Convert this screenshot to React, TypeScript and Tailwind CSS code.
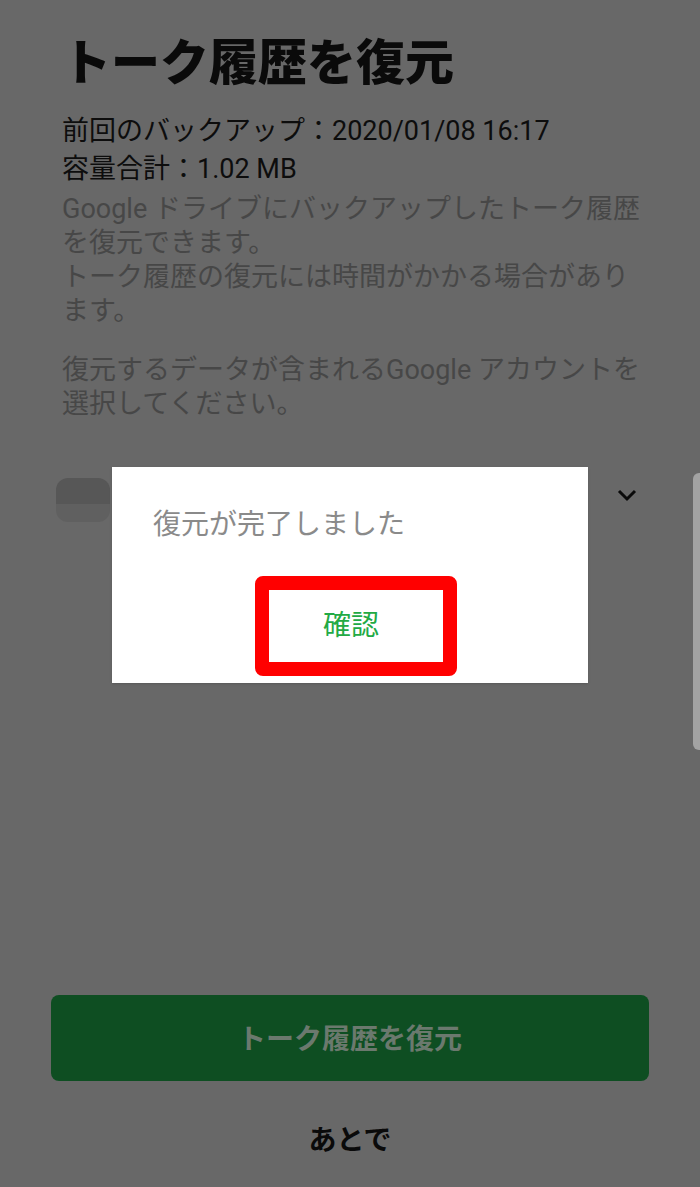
export default function App() {
  return (
    <div
      className="relative flex h-[1187px] w-[700px] flex-col overflow-hidden bg-[#686868]"
      style={{ fontFamily: 'Roboto, "Noto Sans CJK JP", sans-serif' }}
    >
      <div className="px-[62px] pt-[34px]">
        <h1 className="text-[49px] font-black leading-[60px] text-[#0a0a0a]">トーク履歴を復元</h1>
        <div className="mt-[18px] text-[27px] leading-[38px] text-[#0d0d0d]">
          <p>前回のバックアップ：2020/01/08 16:17</p>
          <p>容量合計：1.02 MB</p>
        </div>
        <p className="-mr-[20px] mt-[4px] whitespace-nowrap text-[27px] leading-[34px] text-[#474747]">
          Google ドライブにバックアップしたトーク履歴
          <br />
          を復元できます。
          <br />
          トーク履歴の復元には時間がかかる場合があり
          <br />
          ます。
        </p>
        <p className="-mr-[20px] mt-[25px] whitespace-nowrap text-[27px] leading-[34px] text-[#474747]">
          復元するデータが含まれるGoogle アカウントを
          <br />
          選択してください。
        </p>
        <div className="mt-[57px] -ml-[6px] flex items-start justify-between">
          <div className="flex h-[44px] w-[54px] flex-col overflow-hidden rounded-[12px]">
            <div className="h-[26px] bg-[#575757]" />
            <div className="flex-1 bg-[#606060]" />
          </div>
          <svg width="22" height="14" viewBox="0 0 22 14" className="mt-[10px]">
            <path d="M3 3 L11 11 L19 3" fill="none" stroke="#0a0a0a" strokeWidth="3" />
          </svg>
        </div>
      </div>

      <div className="mt-auto px-[51px] pb-[26px]">
        <div className="flex h-[86px] items-center justify-center rounded-[8px] bg-[#0e4e22]">
          <span className="mt-[4px] text-[28px] font-bold text-[#6b796e]">トーク履歴を復元</span>
        </div>
        <p className="mt-[40px] text-center text-[28px] font-bold leading-[40px] text-[#0a0a0a]">あとで</p>
      </div>

      {/* scrollbar */}
      <div className="absolute right-0 top-[473px] h-[277px] w-[7px] rounded-l-[6px] bg-[#a3a3a3]" />

      {/* dialog */}
      <div className="absolute left-[112px] top-[467px] h-[216px] w-[476px] bg-white shadow-sm">
        <p className="pl-[41px] pt-[38px] text-[28px] leading-[40px] text-[#8a8a8a]">復元が完了しました</p>
        <div className="ml-[143px] mt-[31px] flex h-[100px] w-[202px] items-center justify-center rounded-[8px] border-[14px] border-[#ff0000]">
          <span className="-ml-[10px] text-[28px] text-[#22aa44]">確認</span>
        </div>
      </div>
    </div>
  );
}
